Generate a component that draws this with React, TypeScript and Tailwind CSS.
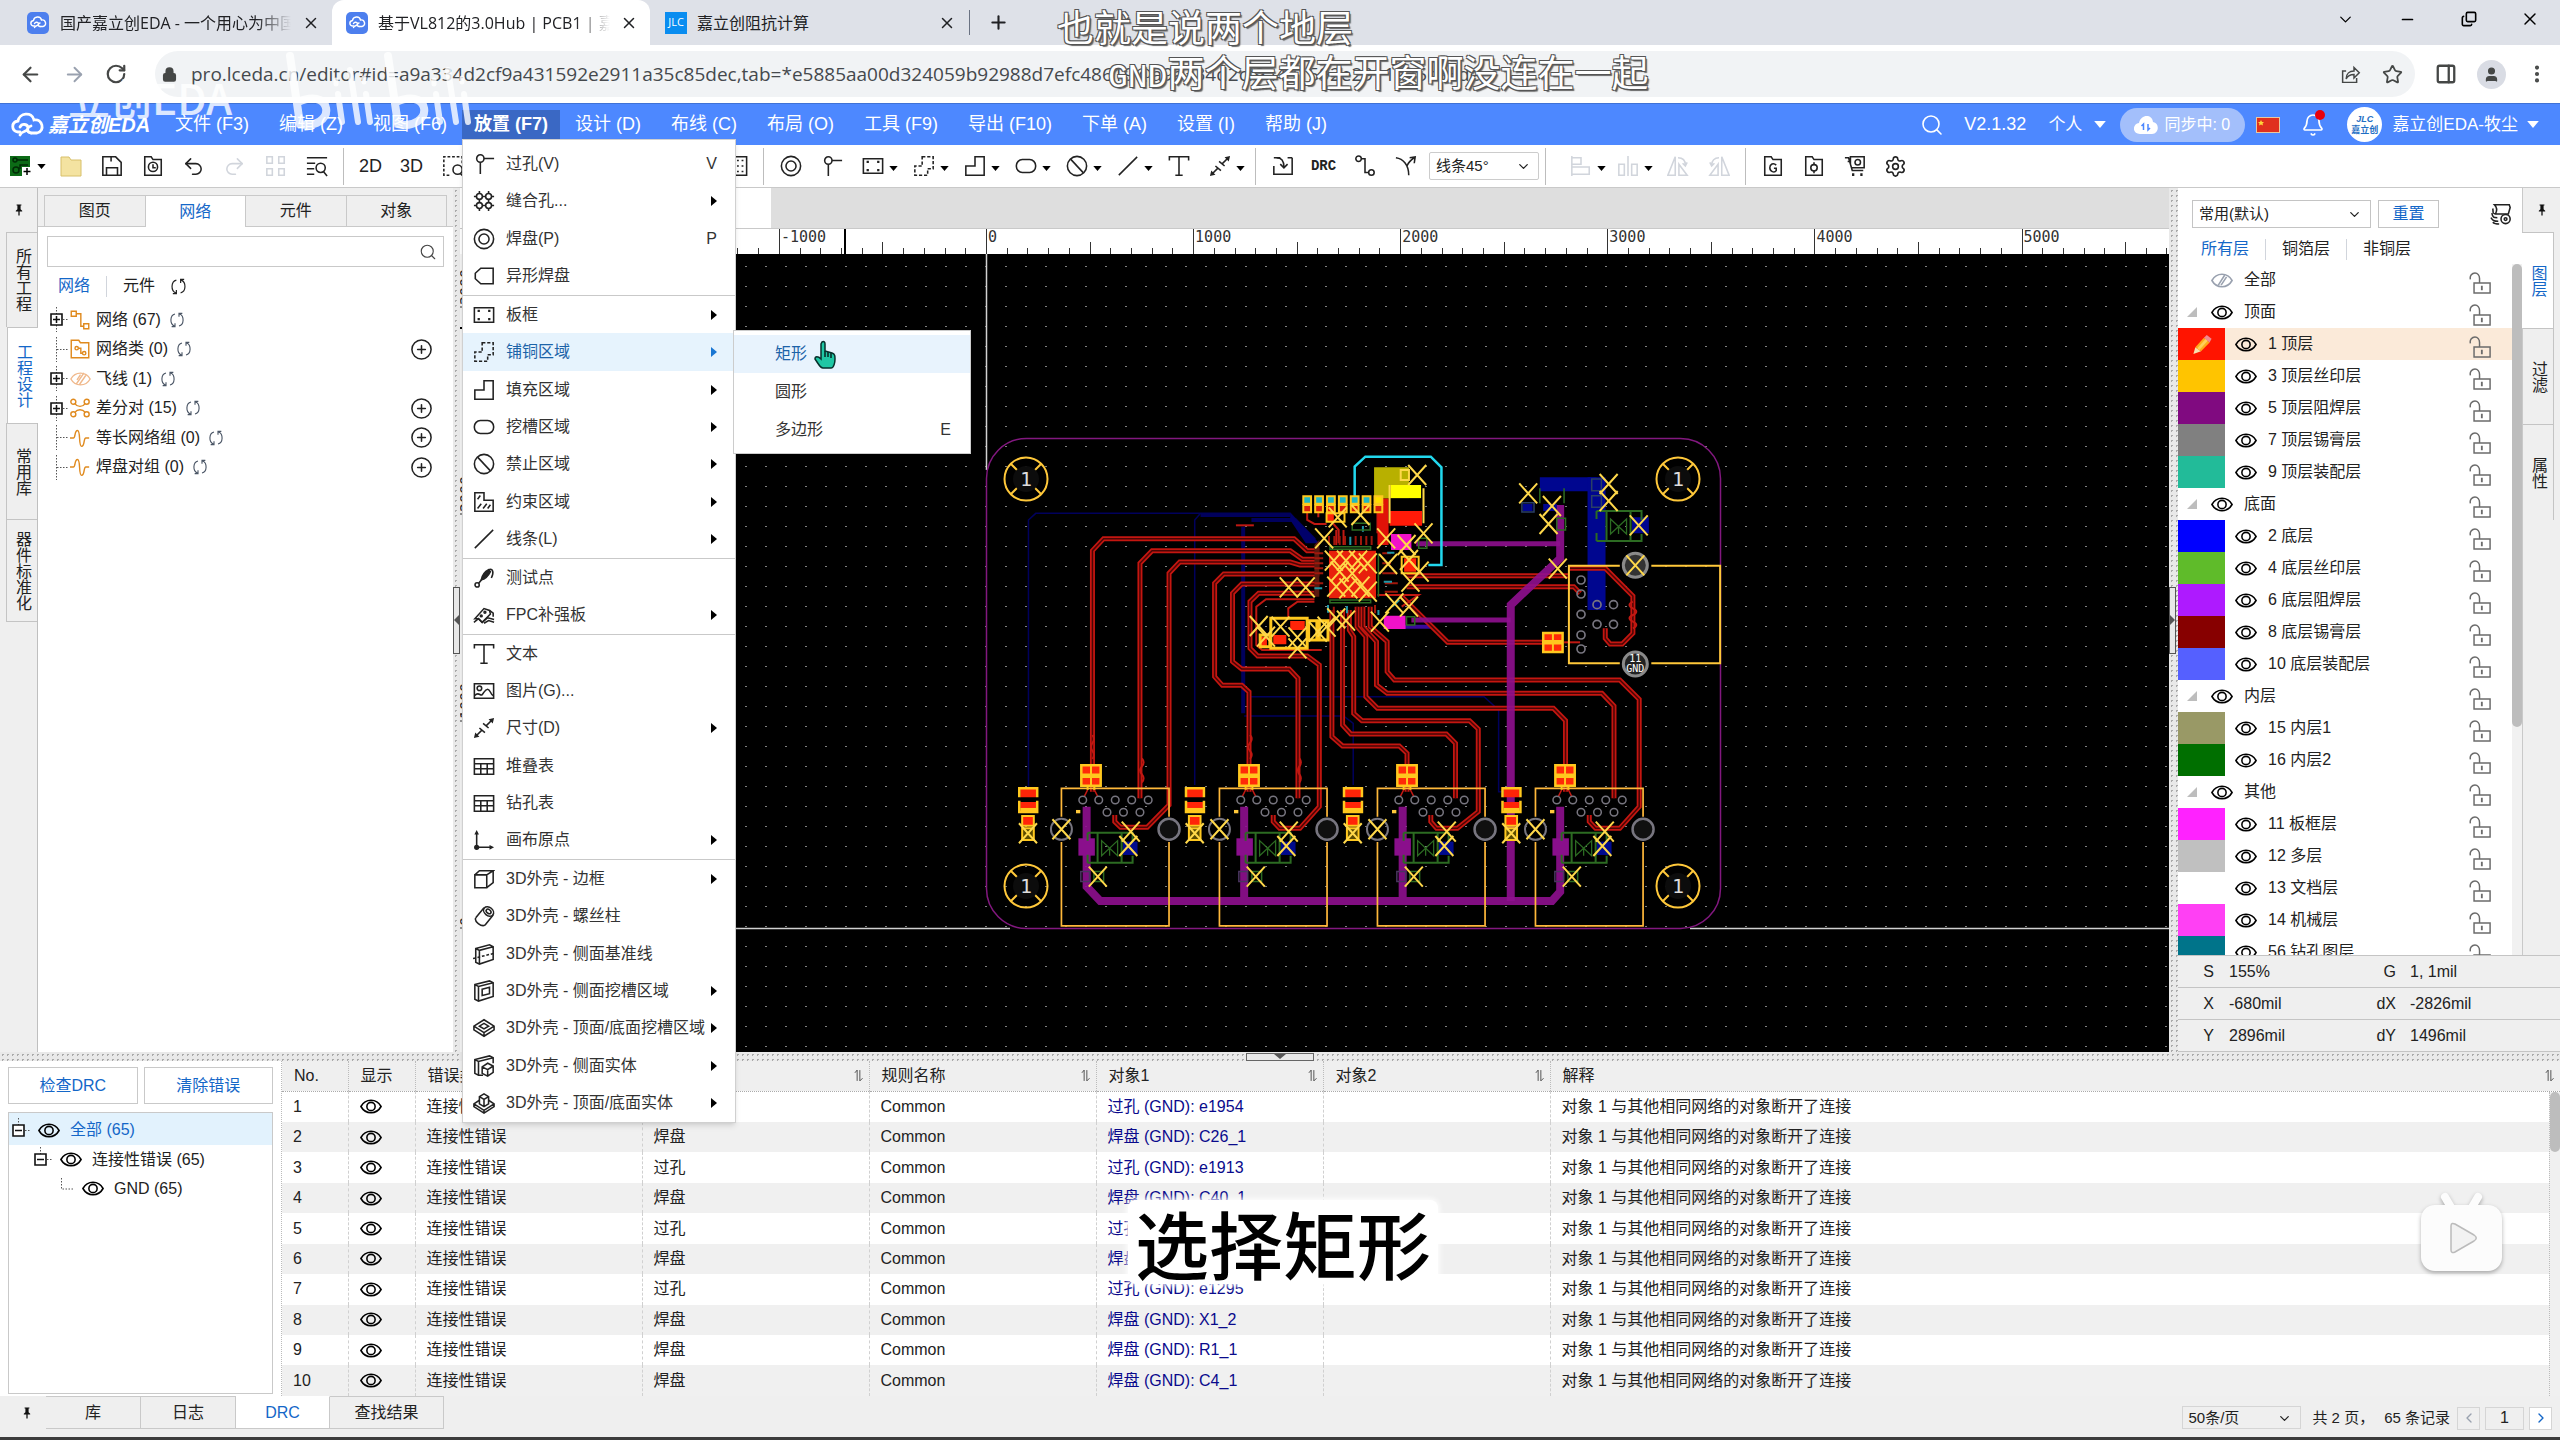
import React, { type ReactNode } from "react";
import {
  ArrowLeft, ArrowRight, RotateCw, Lock, Star, PanelRight, User, MoreVertical, X, Plus, Minus, Copy,
  ChevronDown, ChevronLeft, ChevronRight, Search, Bell, Undo2, Redo2, Settings, CirclePlus,
} from "lucide-react";

const FONT = "font-['Liberation_Sans','Noto_Sans_CJK_SC',sans-serif]";

/* ---------- icons ---------- */

function Svg({ children, className = "size-[22px]", sw = 1.7 }: { children: ReactNode; className?: string; sw?: number }) {
  return (
    <svg viewBox="0 0 24 24" className={`shrink-0 ${className}`} fill="none" stroke="currentColor" strokeWidth={sw} aria-hidden="true">
      {children}
    </svg>
  );
}

const shapes: Record<string, ReactNode> = {
  via: <><circle cx="8" cy="6" r="4" /><path d="M12 6h11M8 10v13" /></>,
  stitch: (
    <>
      <circle cx="7" cy="7" r="3.200" /><circle cx="17" cy="7" r="3.200" /><circle cx="7" cy="17" r="3.200" /><circle cx="17" cy="17" r="3.200" />
      <path d="M7 1v3M17 1v3M7 20v3M17 20v3M1 7h3M20 7h3M1 17h3M20 17h3M7 10v4M17 10v4M10 7h4M10 17h4" />
    </>
  ),
  pad: <><circle cx="12" cy="12" r="10.500" /><circle cx="12" cy="12" r="5.500" /></>,
  shapePad: <path d="M22 3.500v17H8.500L2.500 15V9l6-5.500z" />,
  board: (
    <>
      <path d="M1.500 4h21v16h-21z" />
      <path d="M5 7.500h2.500M16.500 7.500H19M5 16.500h2.500M16.500 16.500H19" strokeWidth="2.500" />
    </>
  ),
  copper: <path d="M10 2h12v13h-6v7H2v-10h8z" strokeDasharray="3.500 2" />,
  fill: <path d="M12 2h10v20H2V12h10z" />,
  slot: <rect x="1.500" y="5" width="21" height="14" rx="6.500" />,
  ban: <><circle cx="12" cy="12" r="10.500" /><path d="M5 4.500l14 15" /></>,
  constraint: <><path d="M2 2h10v8h10v12H2z" /><path d="M5 9l3-4M5 19l4-5M11 19l4-5M16 19l3-4" /></>,
  line: <path d="M2 22L22 2" />,
  probe: (
    <>
      <circle cx="4.500" cy="19.500" r="2.300" /><path d="M6 18l4-5" />
      <path d="M9 14c1-5 4-9 8-11l2 2c-2 4-5 8-10 9z" fill="currentColor" /><path d="M17 3c5-2 6 3 3 9" />
    </>
  ),
  fpc: (
    <>
      <path d="M2 16L12 5l6 2 1 4-9 9-4-4z" /><path d="M1 20l5-4 4 4 6-5 7 2M12 21l5-3 6 2" />
      <circle cx="13" cy="9" r="1" /><circle cx="9" cy="13" r="1" /><path d="M18 7l4 3v4" />
    </>
  ),
  text: <path d="M1.500 6V2h21v4M12 2v20M8 22h8" />,
  image: <><path d="M1.500 4h21v16h-21z" /><circle cx="7" cy="9" r="2.500" /><path d="M2 17c4-5 6 1 8-1s3-6 6-6 3 6 6 7" /></>,
  dim: (
    <>
      <path d="M3 21l7-7M14 10l7-7M7 12l6 5M11 7l6 5" /><path d="M1 23l1.500-6 4.500 4.500zM23 1l-1.500 6L17 2.500z" fill="currentColor" stroke="none" />
    </>
  ),
  table: <path d="M1.500 4h21v17h-21zM1.500 9.500h21M1.500 15h21M8.500 9.500V21M15.500 9.500V21" />,
  sheet: <path d="M1.500 2h21v20h-21zM12 6h2M17 6h2M12 12h2M17 12h2M12 18h2M17 18h2" />,
  origin: (
    <>
      <path d="M4 20V4M4 20h16" /><path d="M4 1l2.500 5h-5zM23 20l-5 2.500v-5z" fill="currentColor" stroke="none" /><circle cx="4" cy="20" r="2" fill="currentColor" />
    </>
  ),
  cube: <path d="M2 7.500h13v14H2zM2 7.500L7 3h15l-7 4.500M22 3v13l-7 5.500" />,
  post: (
    <>
      <path d="M3 14l9-11M13 22l9-11" /><path d="M3 14c-2 4 6 10 10 8" /><ellipse cx="17" cy="7" rx="6" ry="4.500" transform="rotate(40 17 7)" />
      <ellipse cx="17" cy="7" rx="3" ry="2" transform="rotate(40 17 7)" />
    </>
  ),
  sideLine: <><path d="M3 6l15-4 4 2v14L7 23l-4-2zM3 6l4 2L22 4M7 8v15" /><path d="M0 17l24-6" strokeDasharray="3 2" /></>,
  sideSlot: <><path d="M2 5l16-4 4 2v15L6 23l-4-2zM2 5l4 2L22 3M6 7v16" /><path d="M10 10l8-2v7l-8 2z" /></>,
  topSlot: <><path d="M12 3l11 7v4l-11 7L1 14v-4zM1 10l11 7 11-7M12 17v4" /><path d="M12 7l5 3-5 3-5-3z" /></>,
  sideSolid: <><path d="M11 22H6l-4-2V5l16-4 4 2v6M2 5l4 2L22 3M6 7v15" /><path d="M10 13l6-4 6 3v7l-6 4-6-3zM10 13l6 3 6-4M16 16v7" /></>,
  topSolid: (
    <>
      <path d="M7 9l-6 4v3l11 7 11-7v-3l-6-4M1 13l11 7 11-7M12 20v3" /><path d="M7 5l5-3 5 3v8l-5 3-5-3zM7 5l5 3 5-3M12 8v8" />
    </>
  ),
  grid: <path d="M2 2h6v7H2zM15 2h6v7h-6zM2 15h6v7H2zM15 15h6v7h-6z" />,
  listFind: <><path d="M1 3h22M1 9h9M1 15h8M1 21h8" /><circle cx="16" cy="14" r="5" /><path d="M19 18l4 5" /></>,
  dashFind: <><path d="M22 9V2H2v20h8" strokeDasharray="3 2" /><circle cx="17" cy="16" r="5" /><path d="M20 20l3 3" /></>,
  save: <><path d="M2 2h14l6 6v14H2zM6 22v-8h12v8M11 2v5" /></>,
  import: <><path d="M9 3H2M22 3v18H2V12M22 3h-5" /><path d="M5 3c6 0 8 4 8 10M9 10l4 4 4-4" /></>,
  net: <><circle cx="5" cy="4" r="3" /><path d="M8 4h4v15h4" /><circle cx="19" cy="19" r="3" /></>,
  route: <path d="M1 3c8 1 14 8 14 19M13 12c2-5 5-7 8-9M16 3l6-1-1 7" />,
  align: <path d="M2 1v22M2 3h10v7H2M2 13h19v8H2" />,
  distribute: <path d="M12 1v22M2 10h6v12H2zM16 10h6v12h-6z" />,
  mirror: <><path d="M9 2v20H1zM13 10l9 12h-9z" /><path d="M12 3c5 0 8 3 8 8M17 9l3 3 2-4" /></>,
  mirrorFlip: <><path d="M15 2v20h8zM11 10L2 22h9z" /><path d="M12 3C7 3 4 6 4 11M7 9l-3 3-2-4" /></>,
  docG: <><path d="M3 2h7l2 3h9v17H3z" /><path d="M15.500 11c-3-3-7-1-7 3s5 6 7 3v-2.500H13" /></>,
  docGear: <><path d="M3 2h7l2 3h9v17H3z" /><circle cx="12" cy="14" r="3.500" /><path d="M12 8v3M12 17v3" /></>,
  docClock: <><path d="M3 2h7l2 3h9v17H3z" /><circle cx="12" cy="13" r="5" /><path d="M12 10v4h3" /></>,
  cart: <><path d="M1 3h4l4 14h12M7 10V2h15v12H8M4 7h3" /><circle cx="15" cy="8" r="3" /><path d="M10 20v3M19 20v3" strokeWidth="2.500" /></>,
  refresh: <><path d="M9 3C1 5 1 18 8 21M4 22h5v-5M15 21c8-2 8-15 1-18M20 2h-5v5" /></>,
  share: <><path d="M7 8H3v13h16v-5" /><path d="M7 17c0-6 4-9 9-9V4l6 6-6 6v-4c-4 0-7 1-9 5z" /></>,
  orangeNet: <><path d="M1.500 1.500h6v6h-6zM16.500 16.500h6v6h-6zM7.500 4.500H13v15h3.500" /></>,
  orangeClass: <><path d="M1.500 22.500V1.500h9l2 3h10v18z" /><circle cx="8" cy="11" r="2" /><path d="M10 11h3v6h2" /><circle cx="17" cy="17" r="2" /></>,
  orangePair: (
    <>
      <circle cx="4" cy="4.500" r="3" /><circle cx="20" cy="4.500" r="3" /><circle cx="4" cy="19.500" r="3" /><circle cx="20" cy="19.500" r="3" />
      <path d="M6 7c3 4 9 4 12 0M6 17c3-4 9-4 12 0" />
    </>
  ),
  orangeWave: <path d="M0 12h4c3 0 1-9 5-9s1 19 5 19 2-10 5-10h4" />,
  layers: (
    <>
      <path d="M5 2h16l1 3-2 7H6c2-4 2-7-1-10zM3 6c1 5-1 5 3 6M2 11c1 5 2 5 6 5M1 16c2 3 3 4 8 4M3 21c2 2 4 2 7 2" />
      <circle cx="17" cy="17.500" r="5" /><circle cx="17" cy="17.500" r="1.500" />
    </>
  ),
};

function Ic({ n, className }: { n: string; className?: string }) {
  return <Svg className={className}>{shapes[n]}</Svg>;
}

function Eye({ off = false }: { off?: boolean }) {
  return (
    <svg viewBox="0 0 24 16" className={`h-[15px] w-[22px] shrink-0 ${off ? "text-gray-400" : "text-black"}`} fill="none" stroke="currentColor" strokeWidth="1.700" aria-hidden="true">
      <path d="M1 8c5-9 17-9 22 0-5 9-17 9-22 0z" />
      {off ? <path d="M8 13l7-11M11 13l6-9" /> : <circle cx="12" cy="8" r="4.500" />}
    </svg>
  );
}

function Unlock() {
  return (
    <svg viewBox="0 0 24 24" className="size-[22px] shrink-0 text-[#6b6b6b]" fill="none" stroke="currentColor" strokeWidth="1.600" aria-hidden="true">
      <path d="M1.500 8c-1-4 2-7 5-7s5 3 5 6v5M5.500 12h17.500v11H5.500z" />
      <path d="M14 16v4M13 16h2" strokeWidth="2" />
    </svg>
  );
}

function Pin() {
  return (
    <svg viewBox="0 0 10 14" className="h-[12px] w-[8px] shrink-0" aria-hidden="true">
      <path d="M2 0h6v1.500H7V6l2 2v1H5.800V14H4.200V9H1V8l2-2V1.500H2z" fill="#111" />
    </svg>
  );
}

function Caret({ light = false }: { light?: boolean }) {
  return (
    <svg viewBox="0 0 10 6" className={light ? "h-[7px] w-[12px] shrink-0 text-white" : "h-[5px] w-[9px] shrink-0 text-black"} aria-hidden="true">
      <path d="M0 0h10L5 6z" fill="currentColor" />
    </svg>
  );
}

function CloudMark({ className }: { className: string }) {
  return (
    <svg viewBox="0 0 34 26" className={className} fill="none" stroke="currentColor" strokeWidth="2.800" strokeLinecap="round" aria-hidden="true">
      <path d="M9 20H7c-7-1-7-10 0-11C8 1 21-1 23 8c8-2 12 11 3 13h-6" />
      <path d="M9 15c2-4 8-3 8 1-1 5-6 2-8 7M20 21c-5-1-4-6 0-7" />
    </svg>
  );
}

/* ---------- browser chrome ---------- */

function Favicon() {
  return (
    <span className="flex size-[22px] shrink-0 items-center justify-center rounded-[5px] bg-[#4d7fee] text-white">
      <CloudMark className="w-[17px]" />
    </span>
  );
}

function TabTitle({ children }: { children: ReactNode }) {
  return (
    <span className="min-w-0 flex-1 overflow-hidden whitespace-nowrap [mask-image:linear-gradient(to_right,black_85%,transparent)]">{children}</span>
  );
}

function BrowserTabs() {
  return (
    <div className="flex h-[45px] shrink-0 items-stretch bg-[#dee1e8] text-[16px] text-[#202124] font-['Open_Sans','Noto_Sans_CJK_SC',sans-serif]">
      <div className="flex w-[332px] items-center gap-[11px] pl-[27px] pr-[12px]">
        <Favicon />
        <TabTitle>国产嘉立创EDA - 一个用心为中国</TabTitle>
        <button aria-label="关闭标签页"><X size={18} /></button>
      </div>
      <div className="flex w-[318px] items-center gap-[10px] rounded-t-[12px] bg-white pl-[14px] pr-[12px]">
        <Favicon />
        <TabTitle>基于VL812的3.0Hub | PCB1 | 嘉立</TabTitle>
        <button aria-label="关闭标签页"><X size={18} /></button>
      </div>
      <div className="flex w-[319px] items-center gap-[10px] pl-[15px] pr-[13px]">
        <span className="flex h-[22px] w-[22px] shrink-0 items-center justify-center overflow-hidden bg-[#0a8df0] text-[11px] text-white">JLC</span>
        <span className="flex-1">嘉立创阻抗计算</span>
        <button aria-label="关闭标签页"><X size={18} /></button>
      </div>
      <div className="my-[10px] w-px bg-gray-500" />
      <button className="w-[57px] pl-[18px]" aria-label="新标签页"><Plus size={21} strokeWidth={2.400} /></button>
      <div className="flex-1" />
      <div className="flex h-[38px] items-center text-black">
        <button className="flex w-[62px] justify-center" aria-label="搜索标签页"><ChevronDown size={19} strokeWidth={1.600} /></button>
        <button className="flex w-[62px] justify-center" aria-label="最小化"><Minus size={17} strokeWidth={2.400} /></button>
        <button className="flex w-[61px] justify-center" aria-label="还原"><Copy size={16} strokeWidth={2.400} className="-scale-x-100 rotate-180" /></button>
        <button className="flex w-[61px] justify-center" aria-label="关闭"><X size={20} strokeWidth={1.700} /></button>
      </div>
    </div>
  );
}

function AddressBar() {
  return (
    <div className="flex h-[58px] shrink-0 items-center bg-white pl-[19px] text-[#454746]">
      <button className="w-[44px]" aria-label="后退"><ArrowLeft size={23} strokeWidth={2.300} /></button>
      <button className="w-[42px] text-gray-400" aria-label="前进"><ArrowRight size={23} /></button>
      <button className="w-[50px]" aria-label="刷新"><RotateCw size={22} strokeWidth={2.400} /></button>
      <div className="flex h-[46px] flex-1 items-center rounded-full bg-[#f1f3f5] pr-[12px]">
        <Lock size={15} strokeWidth={3} fill="currentColor" className="ml-[7px] shrink-0" />
        <input
          aria-label="地址"
          readOnly
          className="ml-[14px] min-w-0 flex-1 bg-transparent text-[19px] text-[#45494d] outline-none font-['Open_Sans',sans-serif]"
          value="pro.lceda.cn/editor#id=a9a334d2cf9a431592e2911a35c85dec,tab=*e5885aa00d324059b92988d7efc48619@a9a334d2cf9a431592e2911a35c85dec"
        />
        <button className="w-[42px]" aria-label="分享"><Ic n="share" className="size-[21px]" /></button>
        <button aria-label="收藏"><Star size={21} /></button>
      </div>
      <div className="flex w-[145px] items-center gap-[20px] pl-[20px]">
        <button aria-label="侧边栏"><PanelRight size={22} strokeWidth={2.500} /></button>
        <button className="flex size-[29px] items-center justify-center rounded-full bg-[#d9dce4]" aria-label="用户"><User size={17} fill="currentColor" /></button>
        <button aria-label="更多"><MoreVertical size={22} strokeWidth={2.500} /></button>
      </div>
    </div>
  );
}

/* ---------- place menu ---------- */

type Item = { icon: string; label: string; key?: string; sub?: boolean; active?: boolean };

const placeMenu: { h: string; items: Item[] }[] = [
  { h: "h-[150px]", items: [
    { icon: "via", label: "过孔(V)", key: "V" },
    { icon: "stitch", label: "缝合孔...", sub: true },
    { icon: "pad", label: "焊盘(P)", key: "P" },
    { icon: "shapePad", label: "异形焊盘" },
  ] },
  { h: "h-[263px]", items: [
    { icon: "board", label: "板框", sub: true },
    { icon: "copper", label: "铺铜区域", sub: true, active: true },
    { icon: "fill", label: "填充区域", sub: true },
    { icon: "slot", label: "挖槽区域", sub: true },
    { icon: "ban", label: "禁止区域", sub: true },
    { icon: "constraint", label: "约束区域", sub: true },
    { icon: "line", label: "线条(L)", sub: true },
  ] },
  { h: "h-[76px]", items: [
    { icon: "probe", label: "测试点" },
    { icon: "fpc", label: "FPC补强板", sub: true },
  ] },
  { h: "h-[225px]", items: [
    { icon: "text", label: "文本" },
    { icon: "image", label: "图片(G)..." },
    { icon: "dim", label: "尺寸(D)", sub: true },
    { icon: "table", label: "堆叠表" },
    { icon: "table", label: "钻孔表" },
    { icon: "origin", label: "画布原点", sub: true },
  ] },
  { h: "h-[263px]", items: [
    { icon: "cube", label: "3D外壳 - 边框", sub: true },
    { icon: "post", label: "3D外壳 - 螺丝柱" },
    { icon: "sideLine", label: "3D外壳 - 侧面基准线" },
    { icon: "sideSlot", label: "3D外壳 - 侧面挖槽区域", sub: true },
    { icon: "topSlot", label: "3D外壳 - 顶面/底面挖槽区域", sub: true },
    { icon: "sideSolid", label: "3D外壳 - 侧面实体", sub: true },
    { icon: "topSolid", label: "3D外壳 - 顶面/底面实体", sub: true },
  ] },
];

function HandCursor() {
  return (
    <svg viewBox="0 0 22 30" className="absolute left-[80px] top-[9px] h-[30px] w-[22px]" aria-hidden="true">
      <path d="M8 2c2-1 3 0 3 2v7l7 2c3 1 3 3 3 6s-1 9-4 9H9c-3 0-5-5-8-9 0-3 3-3 6 0V4z" fill="#1fc7a4" stroke="#07302b" strokeWidth="1.500" />
      <path d="M11 11v6M14 12v5M17 13v5" stroke="#07302b" strokeWidth="1.600" />
    </svg>
  );
}

function PlaceMenu() {
  return (
    <div className="absolute left-0 top-full z-30 w-[274px] border border-[#d0d0d0] bg-white pt-[5px] text-[16px] font-normal text-[#333] shadow-md" role="menu">
      {placeMenu.map((g, gi) => (
        <div key={gi} className={`flex flex-col ${g.h} ${gi > 0 ? "border-t border-[#c9c9c9]" : ""}`}>
          {g.items.map((it) => (
            <div key={it.label} className={`relative flex flex-1 ${it.active ? "bg-[#e6f3fd]" : ""}`}>
              <button role="menuitem" className={`flex w-full items-center whitespace-nowrap pl-[10px] pr-[18px] ${it.active ? "text-[#1c63a8]" : ""}`}>
                <span className="text-[#222]"><Ic n={it.icon} /></span>
                <span className="ml-[11px] flex-1 text-left">{it.label}</span>
                {it.key && <span>{it.key}</span>}
                {it.sub && (
                  <svg viewBox="0 0 6 10" className={`h-[10px] w-[6px] shrink-0 ${it.active ? "text-[#1976d2]" : "text-black"}`} aria-hidden="true"><path d="M0 0l6 5-6 5z" fill="currentColor" /></svg>
                )}
              </button>
              {it.active && (
                <div className="absolute -top-[3px] left-[270px] w-[238px] border border-[#ccc] bg-white py-[4px]" role="menu">
                  {[["矩形", ""], ["圆形", ""], ["多边形", "E"]].map(([label, key], i) => (
                    <button key={label} role="menuitem" className={`flex h-[38px] w-full items-center justify-between pl-[41px] pr-[19px] ${i === 0 ? "bg-[#e8f3fd] text-[#1c63a8]" : ""}`}>
                      <span>{label}</span>
                      <span>{key}</span>
                    </button>
                  ))}
                  <HandCursor />
                </div>
              )}
            </div>
          ))}
        </div>
      ))}
    </div>
  );
}

function MenuBar() {
  const before = ["文件 (F3)", "编辑 (Z)", "视图 (F6)"];
  const after = ["设计 (D)", "布线 (C)", "布局 (O)", "工具 (F9)", "导出 (F10)", "下单 (A)", "设置 (I)", "帮助 (J)"];
  return (
    <nav className="flex h-[42px] shrink-0 items-center border-t border-[#3f72d6] bg-[#4d88ff] text-[18px] text-white">
      <CloudMark className="ml-[11px] w-[34px] shrink-0" />
      <span className="ml-[3px] w-[112px] shrink-0 whitespace-nowrap text-[20px] font-bold italic">嘉立创EDA</span>
      {before.map((m) => <button key={m} className="h-[29px] whitespace-nowrap px-[15px]">{m}</button>)}
      <div className="relative h-[29px]">
        <button className="h-[29px] w-[98px] whitespace-nowrap bg-[#3a68c4] font-bold">放置 (F7)</button>
        <PlaceMenu />
      </div>
      <div className="flex">
        {after.map((m) => <button key={m} className="h-[29px] whitespace-nowrap px-[15px]">{m}</button>)}
      </div>
      <div className="flex-1" />
      <button className="mr-[20px]" aria-label="搜索"><Search size={24} strokeWidth={1.600} /></button>
      <span className="mr-[22px]">V2.1.32</span>
      <button className="mr-[14px] flex items-center gap-[12px] text-[17px]">个人 <Caret light /></button>
      <span className="mr-[11px] flex h-[34px] w-[125px] shrink-0 items-center whitespace-nowrap rounded-full bg-[#a3bffb] pl-[14px] text-[16px]">
        <svg viewBox="0 0 24 18" className="mr-[6px] w-[24px]" aria-hidden="true">
          <path d="M6 18c-8 0-8-10-1-11C7-2 18-2 19 6c7 1 6 12-1 12z" fill="#fff" />
          <path d="M9.500 14V8l-2 2M14 8v6l2-2" stroke="#4d88ff" fill="none" strokeWidth="1.500" />
        </svg>
        同步中: 0
      </span>
      <svg viewBox="0 0 24 16" className="mr-[21px] w-[24px]" aria-hidden="true">
        <path d="M0 0h24v16H0z" fill="#e8c8a0" /><path d="M1 1h22v14H1z" fill="#e0301e" />
        <path d="M5 3l1 2h2L6.500 6.500 7 8.500 5 7.500 3 8.500l.5-2L2 5h2z" fill="#ffd83a" />
      </svg>
      <button className="relative mr-[22px]" aria-label="通知">
        <Bell size={24} strokeWidth={1.700} />
        <span className="absolute -top-[3px] right-0 size-[10px] rounded-full bg-red-600" />
      </button>
      <span className="mr-[10px] flex size-[35px] shrink-0 flex-col items-center justify-center rounded-full bg-white text-[9px] leading-[11px] text-[#1f6fc4]">
        <b className="italic">JLC</b>
        <b>嘉立创</b>
      </span>
      <button className="mr-[21px] flex items-center gap-[9px] whitespace-nowrap text-[17px]">嘉立创EDA-牧尘 <Caret light /></button>
    </nav>
  );
}

/* ---------- toolbar ---------- */

function Tool({ n, label, dim = false, children }: { n?: string; label: string; dim?: boolean; children?: ReactNode }) {
  return (
    <button aria-label={label} className={`flex w-[41px] shrink-0 items-center justify-center ${dim ? "text-gray-300" : "text-[#222]"}`}>
      {n ? <Ic n={n} /> : children}
    </button>
  );
}
function DropTool({ n, label, dim = false, w = "w-[51px]" }: { n: string; label: string; dim?: boolean; w?: string }) {
  return (
    <button aria-label={label} className={`flex shrink-0 items-center gap-[5px] pl-[10px] ${w} ${dim ? "text-gray-300" : "text-[#222]"}`}>
      <Ic n={n} />
      <span className="pt-[4px]"><Caret /></span>
    </button>
  );
}
const Rule = () => <div className="mx-[6px] h-[37px] w-px shrink-0 bg-[#bdbdbd]" />;

function Toolbar() {
  return (
    <div className="flex h-[43px] shrink-0 items-center border-b border-[#c9c9c9] bg-white">
      <button aria-label="新建" className="flex w-[50px] shrink-0 items-center gap-[5px] pl-[10px]">
        <svg viewBox="0 0 22 20" className="w-[22px]" aria-hidden="true">
          <path d="M0 0h20v20H0z" fill="#0c6b16" />
          <g fill="none" stroke="#012c06" strokeWidth="1.500"><circle cx="5" cy="4" r="2" /><path d="M7 4h11M18 9h-8v4" /><circle cx="6" cy="14" r="3" /></g>
          <path d="M12 11h10v9H12z" fill="#fff" /><path d="M17 12v7M13.500 15.500h7" stroke="#000" strokeWidth="1.500" />
        </svg>
        <Caret />
      </button>
      <Tool label="打开">
        <svg viewBox="0 0 22 22" className="w-[22px]" aria-hidden="true"><path d="M1 2h8l2 3h10v16H1z" fill="#f4e3a1" stroke="#d8c06a" /></svg>
      </Tool>
      <Tool n="save" label="保存" />
      <Tool n="docClock" label="历史" />
      <Tool label="撤销"><Undo2 size={23} strokeWidth={1.600} /></Tool>
      <Tool label="重做" dim><Redo2 size={23} strokeWidth={1.600} /></Tool>
      <Tool n="grid" label="网格" dim />
      <Tool n="listFind" label="查找" />
      <Rule />
      <Tool label="二维"><span className="text-[18px]">2D</span></Tool>
      <Tool label="三维"><span className="text-[18px]">3D</span></Tool>
      <Tool n="dashFind" label="框选查找" />
      <div className="w-[243px] shrink-0" />
      <Tool n="sheet" label="表格" />
      <Rule />
      <Tool n="pad" label="焊盘" />
      <Tool n="via" label="过孔" />
      <DropTool n="board" label="板框" />
      <DropTool n="copper" label="铺铜" />
      <DropTool n="fill" label="填充" />
      <DropTool n="slot" label="挖槽" />
      <DropTool n="ban" label="禁止" />
      <DropTool n="line" label="线条" />
      <Tool n="text" label="文本" />
      <DropTool n="dim" label="尺寸" w="w-[50px]" />
      <Rule />
      <Tool n="import" label="导入变更" />
      <Tool label="检查"><span className="font-['Liberation_Mono'] text-[14px] font-bold">DRC</span></Tool>
      <Tool n="net" label="布线" />
      <Tool n="route" label="差分布线" />
      <div className="relative ml-[3px] w-[110px] shrink-0">
        <select aria-label="线条角度" className="h-[28px] w-full appearance-none rounded-[2px] border border-[#ccc] bg-white pl-[6px] text-[15px]"><option>线条45°</option></select>
        <ChevronDown size={15} className="pointer-events-none absolute right-[8px] top-[7px]" />
      </div>
      <Rule />
      <div className="w-[8px] shrink-0" />
      <DropTool n="align" label="对齐" dim w="w-[47px]" />
      <DropTool n="distribute" label="分布" dim w="w-[50px]" />
      <Tool n="mirror" label="左右翻转" dim />
      <Tool n="mirrorFlip" label="旋转" dim />
      <Rule />
      <Tool n="docG" label="Gerber" />
      <Tool n="docGear" label="贴片坐标" />
      <Tool n="cart" label="下单" />
      <Tool label="设置"><Settings size={23} strokeWidth={1.700} /></Tool>
    </div>
  );
}

/* ---------- left panel ---------- */

const sideTabs = [
  { t: "所有工程", h: "h-[95px]" },
  { t: "工程设计", h: "h-[96px]", on: true },
  { t: "常用库", h: "h-[96px]" },
  { t: "器件标准化", h: "h-[103px]" },
];

const tree = [
  { icon: "orangeNet", t: "网络 (67)", box: true },
  { icon: "orangeClass", t: "网络类 (0)", add: true },
  { icon: "eye", t: "飞线 (1)", box: true },
  { icon: "orangePair", t: "差分对 (15)", box: true, add: true },
  { icon: "orangeWave", t: "等长网络组 (0)", add: true },
  { icon: "orangeWave", t: "焊盘对组 (0)", add: true },
];

function TreeBox({ sign, off = false }: { sign: "+" | "-"; off?: boolean }) {
  return (
    <svg viewBox="0 0 20 29" className="h-[29px] w-[20px] shrink-0" fill="none" stroke="#111" aria-hidden="true">
      <path d={sign === "+" ? "M6.500 2V27M7 14.500h12" : "M6.500 2V14M7 14.500h12"} strokeDasharray="1.500 1.500" stroke="#555" />
      {!off && <><path d="M1 9h11v11H1z" fill="#fff" strokeWidth="1.600" /><path d={sign === "+" ? "M3 14.500h7M6.500 11v7" : "M3 14.500h7"} strokeWidth="1.500" /></>}
    </svg>
  );
}

function LeftPanel() {
  return (
    <aside className="flex w-[453px] shrink-0">
      <div className="flex w-[38px] shrink-0 flex-col items-end border-r border-[#bfbfbf] bg-[#efefef]">
        <button className="flex h-[44px] w-full items-center justify-center" aria-label="固定"><Pin /></button>
        {sideTabs.map((s) => (
          <button key={s.t} className={`flex w-[31px] items-center justify-center border-l border-t border-[#c4c4c4] text-[16px] leading-[18px] last:border-b [writing-mode:vertical-rl] ${s.h} ${s.on ? "-mr-px bg-white text-[#1467c8]" : "text-[#222]"}`}>
            {s.t}
          </button>
        ))}
      </div>
      <div className="flex min-w-0 flex-1 flex-col bg-white">
        <div className="flex h-[39px] items-end border-b border-[#c9c9c9] bg-[#efefef] px-[6px]">
          {["图页", "网络", "元件", "对象"].map((t, i) => (
            <button key={t} className={`flex-1 border-l border-t border-[#c9c9c9] text-[16px] last:border-r ${i === 1 ? "-mb-px h-[32px] bg-white text-[#1467c8]" : "h-[31px] text-[#222]"}`}>{t}</button>
          ))}
        </div>
        <div className="relative mx-[9px] mt-[9px]">
          <input aria-label="搜索网络" className="block h-[31px] w-full border border-[#c9c9c9] px-2" />
          <Search size={18} strokeWidth={1.500} className="absolute right-[7px] top-[7px] text-[#444]" />
        </div>
        <div className="flex h-[38px] items-center pl-[20px] text-[16px]">
          <button className="text-[#1467c8]">网络</button>
          <span className="mx-[16px] h-[21px] w-px bg-gray-300" />
          <button>元件</button>
          <Ic n="refresh" className="ml-[15px] size-[17px]" />
        </div>
        <ul className="grid h-[177px] grid-rows-6 pl-[12px] pr-[20px] text-[16px] text-[#222]">
          {tree.map((r) => (
            <li key={r.t} className="flex items-center">
              <TreeBox sign="+" off={!r.box} />
              <span className="mr-[5px] flex w-[21px] text-[#e08a1e]">
                {r.icon === "eye" ? (
                  <svg viewBox="0 0 24 16" className="w-[21px] text-[#f0b98c]" fill="none" stroke="currentColor" strokeWidth="1.600" aria-hidden="true"><path d="M1 8c5-9 17-9 22 0-5 9-17 9-22 0zM7 14L16 1M11 14l7-10M8 9l4-6" /></svg>
                ) : <Ic n={r.icon} className="size-[20px]" />}
              </span>
              <span className="whitespace-nowrap">{r.t}</span>
              <Ic n="refresh" className="ml-[8px] size-[16px] text-gray-600" />
              <span className="flex-1" />
              {r.add && <button aria-label={`添加 ${r.t}`}><CirclePlus size={23} strokeWidth={1.600} /></button>}
            </li>
          ))}
        </ul>
      </div>
    </aside>
  );
}

/* ---------- canvas ---------- */

const major = [-1000, 0, 1000, 2000, 3000, 4000, 5000];
const minor = Array.from({ length: 84 }, (_, i) => i - 24);

function RulerTop() {
  return (
    <svg className="block h-[25px] w-full shrink-0 bg-white" aria-hidden="true">
      <g transform="translate(-460 0)">
        {minor.map((m) => {
          const x = Math.round(986 + m * 20.71);
          const len = m % 10 === 0 ? 25 : m % 5 === 0 ? 12 : 6;
          return <path key={m} d={`M${x + 0.5} ${25 - len}V25`} stroke="#333" />;
        })}
        <path d="M845 0V25" stroke="#000" strokeWidth="2" />
        {major.map((m) => (
          <text key={m} x={988 + m * 0.2071} y="13" fontSize="15" fill="#333" fontFamily="DejaVu Sans Mono, monospace">{m}</text>
        ))}
      </g>
    </svg>
  );
}

function RulerSide() {
  return (
    <svg className="block h-full w-[25px] shrink-0 bg-[#f3f3f3]" aria-hidden="true">
      <g transform="translate(0 -254)">
        {[0, 1, 2, 3].map((m) => (
          <g key={m}>
            <path d={`M0 ${928 - m * 207}H25`} stroke="#333" />
            <text transform={`translate(12 ${926 - m * 207}) rotate(-90)`} fontSize="15" fill="#333" fontFamily="DejaVu Sans Mono, monospace">{m * 1000}</text>
          </g>
        ))}
        <path d="M0 328H25" stroke="#000" strokeWidth="2" />
      </g>
    </svg>
  );
}

const traces = [
  "M700 362H675L648 326H255L232 362V1085",
  "M700 388H665L640 362H355L330 400V1105",
  "M700 405H660L640 396H412L390 430V1125L345 1192H290L278 1175V1155",
  "M700 432H503L484 460V740L500 766H540L555 786V1085",
  "M700 462H540L521 490V695L540 717H638L656 745V1105",
  "M690 490H575L557 515V655L573 678H675L700 705V1130L660 1195H618L605 1175V1155",
  "M726 540V920L748 948H865L881 970V1085",
  "M748 540V885L765 912H962L981 940V1105",
  "M762 540V600L771 620V850L788 872H1010L1028 897V1145L985 1195H942L930 1175V1155",
  "M778 530V590L796 620V800L820 835H1183L1208 872V1085",
  "M790 530V590L818 635V765L840 790H1283L1308 828V1105",
  "M805 530V590L840 635V725L855 750H1320L1360 808V1130L1320 1195H1270L1257 1175V1155",
  "M880 437H1215M880 470H1225L1238 490",
  "M870 500L965 637H1160",
  "M1215 415H1290L1347 498V610L1325 642H1300L1290 625V595",
];
const thinTraces = [
  "M1205 637H1238", "M690 515H655L636 535V565", "M690 508H590L570 530V645L582 660H705",
  "M675 248V270L690 282H715M698 248V262M722 248V270L740 300V340M735 300V345M750 300V345M820 248V310",
  "M232 915q6 12 0 24t0 24t0 24M334 985q7 12 0 24t0 24t0 24M557 915q7 12 0 24t0 24t0 24M659 985q6 12 0 24t0 24t0 24",
  "M1347 515q-14 10 0 20t0 20t0 20t0 20", "M528 286H565", "M820 495H905L870 530",
];
const crosses: [number, number][] = [
  [902, 135], [1131, 190], [1297, 162], [1297, 213], [1180, 228], [1173, 282], [1359, 286], [1192, 416], [915, 310], [710, 325], [785, 255], [738, 262],
  [838, 325], [637, 472], [672, 472], [575, 588], [620, 590], [655, 622], [655, 655], [715, 590], [755, 572], [825, 575], [855, 520],
  [885, 530], [888, 455], [885, 390], [907, 425], [842, 402], [697, 605], [735, 565], [1352, 406],
  [730, 392], [755, 392], [780, 392], [800, 400], [742, 425], [768, 430], [735, 470], [760, 475], [785, 470], [800, 485], [590, 620], [880, 345],
];
const usb = [0, 326, 652, 978];
const leds = [0, 344, 670, 997];
const pinDots: [number, number][] = [[212, 1110], [245, 1110], [279, 1110], [313, 1110], [347, 1110], [262, 1147], [296, 1147], [330, 1147]];
const cPins: [number, number][] = [[1240, 450], [1240, 492], [1240, 553], [1240, 615], [1240, 657], [1273, 524], [1307, 524], [1273, 583], [1307, 583]];
const holes: [number, number][] = [[1026, 479], [1678, 479], [1026, 886], [1678, 886]];

const SX = 0.4847;
const SY = 0.3333;
const px = (x: number) => 980 + x * SX;
const py = (y: number) => 430 + y * SY;

const Cross = ({ x, y }: { x: number; y: number }) => (
  <path d={`M${px(x) - 9} ${py(y) - 10}l18 20m0-20l-18 20`} stroke="#ffd84a" strokeWidth="2" fill="none" />
);

function GreenPart({ x, y }: { x: number; y: number }) {
  return (
    <g transform={`translate(${px(x)} ${py(y)})`} fill="none" stroke="#2c6b22" strokeWidth="1.300">
      <path d="M10 1V31M34 1V31M0 1H45V10M0 31H45V24M0 1V9M0 23V31" strokeWidth="2" />
      <path d="M14 9V24L30 9V24ZM22 16V24" />
    </g>
  );
}

function Board() {
  return (
    <svg className="block h-full w-full bg-black" role="img" aria-label="PCB">
      <defs>
        <pattern id="dots" width="20" height="20" patternUnits="userSpaceOnUse" x="5" y="6"><path d="M0 0h2v1H0z" fill="#808080" /></pattern>
      </defs>
      <g transform="translate(-485 -254)">
        <rect x="485" y="254" width="3000" height="2000" fill="url(#dots)" />
        <path d="M986.500 254V470M485 928.500H1010M1690 928.500H3000" stroke="#d0d0d0" strokeWidth="1.500" />
        <rect x="986.500" y="438.500" width="734" height="490" rx="40" fill="none" stroke="#82187f" strokeWidth="1.500" />

        <g transform={`translate(980 430) scale(${SX} ${SY})`} fill="none">
          <g stroke="#00005c" className="[&>path]:[vector-effect:non-scaling-stroke]">
            <path d="M100 1070V270L115 250H640L690 330M443 1065V270L455 250M545 858H750L770 880V1065M555 800H1040L1070 840V1085H1095" strokeWidth="1.500" />
            <path d="M543 290V850M455 255H640M560 270H650L690 330" strokeWidth="4" />
            <path d="M640 250L700 340H672L640 270z" fill="#00006a" stroke="none" />
            <path d="M1155 163H1272" stroke="#00068f" strokeWidth="14" />
            <path d="M1272 142V540" stroke="#00068f" strokeWidth="18" />
            <path d="M860 590H930" stroke="#3a0a9a" strokeWidth="4" />
          </g>
          <g className="[&>path]:[vector-effect:non-scaling-stroke]">
            {traces.map((d) => <path key={d} d={d} stroke="#c41610" strokeWidth="5" />)}
            {traces.map((d) => <path key={d} d={d} stroke="#4a0505" strokeWidth="1.500" />)}
            {thinTraces.map((d) => <path key={d} d={d} stroke="#c01812" strokeWidth="2" />)}
          </g>
          <g stroke="#8f108f" strokeOpacity="0.900" className="[&>path]:[vector-effect:non-scaling-stroke]">
            <path d="M900 341H1197M890 570H1095" strokeWidth="5" />
            <path d="M1197 225V385L1095 525V1413" strokeWidth="8" />
            <path d="M220 1130V1370L248 1413H1180L1197 1385V1130M545 1130V1413M872 1130V1413" strokeWidth="8" />
          </g>
          <g stroke="none">
            <path d="M820 205H843V345H820z" fill="#e01208" />
            <path d="M813 112H885V205H813z" fill="#b8b000" />
            <path d="M848 165H910V205H848z" fill="#ffff00" />
            <path d="M848 205H912V243H848z" fill="#000" />
            <path d="M845 243H912V287H845z" fill="#ff1a08" />
            <path d="M720 362H817V505H720z" fill="#e8200c" />
            <path d="M848 312H890V360H848zM833 557H878V597H833z" fill="#f012c8" />
            <path d="M640 573H670V600H640zM605 615H632V643H605zM578 620H592V650H578zM715 250H730V275H715zM875 385H900V425H875z" fill="#ff2408" />
            <path d="M1120 222H1140V243H1120zM1162 222H1190V243H1162zM1345 262H1380V310H1345z" fill="#00068f" />
            <path d="M690 345L700 330V500H690z" fill="#5a1a10" />
          </g>
          <g className="[&>path]:[vector-effect:non-scaling-stroke]">
            <path d="M773 210V110L795 80H930L952 112V405H925" stroke="#22d8ee" strokeWidth="2.500" />
            <path d="M845 165V280M915 175V280M868 120H885V150H868z" stroke="#ffd84a" strokeWidth="2" />
            <path d="M600 565H675V655H600zM578 615H598V650H578zM678 572H695V630H678zM700 572H718V630H700z" stroke="#ffc81e" strokeWidth="3" />
            <path d="M870 380H905V430H870zM715 250H752V275H715z" stroke="#ffc81e" strokeWidth="2" />
            <path d="M720 345V318M731 345V318M742 345V318M753 345V318M775 345V318M786 345V318M797 345V318M808 345V318M690 370H708M690 385H708M690 400H708M690 415H708M690 430H708M690 460H708M830 370H848M830 400H848M830 430H860M835 460H862M835 485H862M730 530V550M815 525V550" stroke="#a0180c" strokeWidth="2" />
            <path d="M764 320V345M690 475H706M833 455H850M718 525V548M757 528V550M840 368H855M822 540V555M850 530L865 510M790 288V305" stroke="#2098a8" strokeWidth="2" />
            <path d="M722 350H806V358H722zM722 510H806V518H722zM822 370V500M768 280H805V300H768zM905 325H922V355H905zM880 560H897V585H880zM1155 175V220M1205 175V220M1190 265H1208V300H1190z" stroke="#2c6b22" strokeWidth="1.500" />
            <path d="M1320 407H1215V700H1320M1385 407H1527V700H1385" stroke="#ffc83a" strokeWidth="2" />
            <path d="M1262 147H1282V182H1262zM1262 197H1282V232H1262zM1118 218H1143V246H1118z" stroke="#2a3f66" strokeWidth="1.500" />
          </g>
          {[0, 1, 2, 3, 4, 5, 6].map((i) => (
            <g key={i} transform={`translate(${667 + i * 24.5} 199)`} className="[&>path]:[vector-effect:non-scaling-stroke]">
              <path d="M0 0H16V22H0z" fill={i === 6 ? "#ffe000" : "#1fb7c4"} stroke="#ffc81e" strokeWidth="2" />
              <path d="M0 26H16V48H0z" fill="#d8200c" stroke="#ffc81e" strokeWidth="2" />
            </g>
          ))}
          {usb.map((dx) => (
            <g key={dx} transform={`translate(${dx} 0)`} className="[&>path]:[vector-effect:non-scaling-stroke]">
              <path d="M168 1160V1075H390V1160M168 1236V1488H390V1236" stroke="#ffb83a" strokeWidth="1.700" />
              <path d="M203 1225H237V1277H203z" fill="#8a0f8c" />
              <path d="M209 1006H249V1034H209zM209 1040H249V1067H209z" fill="#ff2a08" stroke="#ffc81e" strokeWidth="2.500" />
              <path d="M229 1006V1067M222 1067V1080M236 1067V1080" stroke="#ffc81e" strokeWidth="2" />
              <path d="M222 1080L215 1100M236 1080L243 1100" stroke="#c01812" strokeWidth="1.500" />
              <path d="M208 1325H226V1355H208z" stroke="#4a3560" strokeWidth="1.500" />
              <path d="M235 1325H255V1355H235z" stroke="#2c6b22" strokeWidth="1.500" />
              <path d="M295 1235H325V1275H295z" fill="#000a8c" />
              <path d="M198 1140H207V1150H198z" fill="#ffc83a" />
            </g>
          ))}
          {leds.map((dx) => (
            <g key={dx} transform={`translate(${dx} 0)`} className="[&>path]:[vector-effect:non-scaling-stroke]">
              <path d="M83 1077H116V1102H83zM83 1116H116V1134H83z" fill="#ff2408" />
              <path d="M83 1134H116V1146H83z" fill="#ffc81e" />
              <path d="M81 1102V1075H118V1102M81 1112V1146H118V1112" stroke="#ffc81e" strokeWidth="2.500" />
              <path d="M87 1158H111V1187H87z" fill="#ff2408" stroke="#ffc81e" strokeWidth="2" />
              <path d="M87 1195H111V1230H87z" fill="#5a4a00" stroke="#ffc81e" strokeWidth="2" />
            </g>
          ))}
          <g className="[&>path]:[vector-effect:non-scaling-stroke]">
            <path d="M1162 609H1202V634H1162zM1162 640H1202V666H1162z" fill="#ff2a08" stroke="#ffc81e" strokeWidth="2.500" />
            <path d="M1182 609V666" stroke="#ffc81e" strokeWidth="2" />
          </g>
        </g>

        <GreenPart x={1272} y={240} />
        {usb.map((dx) => (
          <g key={dx}>
            <GreenPart x={222 + dx} y={1205} />
            <g fill="none" stroke="#77757f" strokeWidth="1.500">
              {pinDots.map(([x, y]) => <circle key={`${x}-${y}`} cx={px(x + dx)} cy={py(y)} r="3.800" />)}
              <circle cx={px(168 + dx)} cy={py(1198)} r="10.500" strokeWidth="2" />
              <circle cx={px(390 + dx)} cy={py(1198)} r="10.500" strokeWidth="2.500" fill="#101010" />
            </g>
            <Cross x={168 + dx} y={1198} /><Cross x={311 + dx} y={1205} /><Cross x={306 + dx} y={1248} /><Cross x={243 + dx} y={1340} />
          </g>
        ))}
        {leds.map((dx) => <Cross key={dx} x={99 + dx} y={1210} />)}
        <g fill="none" stroke="#77757f" strokeWidth="1.700">
          {cPins.map(([x, y]) => <circle key={`${x}-${y}`} cx={px(x)} cy={py(y)} r="4" />)}
        </g>
        <circle cx={px(1352)} cy={py(406)} r="12" fill="#333" stroke="#8a8a8a" strokeWidth="3" />
        <circle cx={px(1352)} cy={py(702)} r="12" fill="#222" stroke="#8a8a8a" strokeWidth="3" />
        <text x={px(1352)} y="662" textAnchor="middle" fontSize="10" fill="#fff" fontFamily="DejaVu Sans Mono, monospace">11</text>
        <text x={px(1352)} y="672" textAnchor="middle" fontSize="10" fill="#fff" fontFamily="DejaVu Sans Mono, monospace">GND</text>
        {crosses.map(([x, y]) => <Cross key={`${x}-${y}`} x={x} y={y} />)}
        {holes.map(([x, y]) => (
          <g key={`${x}-${y}`}>
            <circle cx={x} cy={y} r="21.500" fill="none" stroke="#ffc83a" strokeWidth="2" />
            <path d={`M${x - 15} ${y - 15}l30 30m0-30l-30 30`} stroke="#ffc83a" strokeWidth="2" />
            <circle cx={x} cy={y} r="13" fill="#0c0c0c" />
            <text x={x} y={y + 7} textAnchor="middle" fontSize="20" fill="#ddd" fontFamily="DejaVu Sans Mono, monospace">1</text>
          </g>
        ))}
      </g>
    </svg>
  );
}

const DOTS = "bg-[#e9e9e9] bg-[radial-gradient(#aaa_1px,transparent_1px)] bg-[length:5px_5px]";

function VSplitter({ flip = false }: { flip?: boolean }) {
  return (
    <div className={`flex shrink-0 items-center ${flip ? "w-[9px]" : "w-[7px]"} ${DOTS}`}>
      <div className="flex h-[67px] w-[7px] items-center justify-center border border-[#555] bg-[#e8e8e8]">
        <svg viewBox="0 0 5 10" className="h-[10px] w-[5px]" aria-hidden="true"><path d={flip ? "M0 0l5 5-5 5z" : "M5 0L0 5l5 5z"} fill="#555" /></svg>
      </div>
    </div>
  );
}

/* ---------- right panel ---------- */

type Layer = { t: string; c?: string; group?: boolean; all?: boolean; on?: boolean };
const layers: Layer[] = [
  { t: "全部", all: true },
  { t: "顶面", group: true },
  { t: "1 顶层", c: "bg-[#ff1400]", on: true },
  { t: "3 顶层丝印层", c: "bg-[#ffc400]" },
  { t: "5 顶层阻焊层", c: "bg-[#800a80]" },
  { t: "7 顶层锡膏层", c: "bg-[#808080]" },
  { t: "9 顶层装配层", c: "bg-[#22bb99]" },
  { t: "底面", group: true },
  { t: "2 底层", c: "bg-[#0000ff]" },
  { t: "4 底层丝印层", c: "bg-[#5fbb2a]" },
  { t: "6 底层阻焊层", c: "bg-[#ae1aff]" },
  { t: "8 底层锡膏层", c: "bg-[#870000]" },
  { t: "10 底层装配层", c: "bg-[#5560ff]" },
  { t: "内层", group: true },
  { t: "15 内层1", c: "bg-[#999966]" },
  { t: "16 内层2", c: "bg-[#006f00]" },
  { t: "其他", group: true },
  { t: "11 板框层", c: "bg-[#ff22ff]" },
  { t: "12 多层", c: "bg-[#c0c0c0]" },
  { t: "13 文档层", c: "bg-white" },
  { t: "14 机械层", c: "bg-[#ff40f4]" },
  { t: "56 钻孔图层", c: "bg-[#00748a]" },
];

function LayerRow({ l }: { l: Layer }) {
  return (
    <li className={`flex h-[32px] shrink-0 items-center ${l.on ? "bg-[#fbead9]" : ""}`}>
      {l.c ? (
        <span className={`flex h-full w-[47px] items-center justify-center ${l.c}`}>
          {l.on && (
            <svg viewBox="0 0 20 22" className="h-[21px] w-[20px]" aria-hidden="true">
              <path d="M1 21l2-7 6 4z" fill="#f8dfb0" /><path d="M3 14L12 4l6 5-9 9z" fill="#ffab1a" /><path d="M5 15l9-10 2 2-9 10z" fill="#ffd05a" /><path d="M12 4l3-3 5 4-2 4z" fill="#f08a90" />
            </svg>
          )}
        </span>
      ) : (
        <span className="flex w-[23px] justify-center pl-[4px]">
          {l.group && <svg viewBox="0 0 10 10" className="size-[10px]" aria-hidden="true"><path d="M10 0v10H0z" fill="#bdbdbd" /></svg>}
        </span>
      )}
      <span className="ml-[10px] flex"><Eye off={l.all} /></span>
      <span className="ml-[11px] flex-1 whitespace-nowrap">{l.t}</span>
      <span className="mr-[21px] pt-[5px]"><Unlock /></span>
    </li>
  );
}

function RightPanel() {
  return (
    <aside className="flex w-[382px] shrink-0 flex-col bg-[#efefef] text-[16px] text-[#222]">
      <div className="flex min-h-0 flex-1">
        <div className="flex w-[345px] flex-col border-r border-[#c9c9c9] bg-white">
          <div className="flex h-[52px] shrink-0 items-center pl-[14px] pr-[10px]">
            <div className="relative w-[179px]">
              <select aria-label="图层方案" className="h-[28px] w-full appearance-none border border-[#c4c4c4] bg-white pl-[6px] text-[15px]"><option>常用(默认)</option></select>
              <ChevronDown size={15} className="pointer-events-none absolute right-[9px] top-[7px]" />
            </div>
            <button className="ml-[7px] h-[28px] w-[61px] border border-[#c4c4c4] leading-[24px] text-[#1467c8]">重置</button>
            <span className="flex-1" />
            <button aria-label="图层管理"><Ic n="layers" /></button>
          </div>
          <div className="flex h-[24px] shrink-0 items-center pb-[6px] pl-[23px]">
            <button className="text-[#1467c8]">所有层</button>
            <span className="mx-[16px] h-[21px] w-px bg-gray-300" />
            <button>铜箔层</button>
            <span className="mx-[16px] h-[21px] w-px bg-gray-300" />
            <button>非铜层</button>
          </div>
          <div className="flex min-h-0 flex-1">
            <ul className="flex min-h-0 flex-1 flex-col overflow-hidden">
              {layers.map((l) => <LayerRow key={l.t} l={l} />)}
            </ul>
            <div className="w-[10px] bg-[#f1f1f1]"><div className="h-[67%] rounded-full bg-[#bdbdbd]" /></div>
          </div>
        </div>
        <div className="flex w-[31px] flex-col">
          <button className="flex h-[44px] items-center justify-center pl-[7px]" aria-label="固定"><Pin /></button>
          {["图层", "过滤", "属性"].map((t, i) => (
            <button key={t} className={`flex h-[96px] items-center justify-center border-r border-t border-[#c4c4c4] leading-[18px] [writing-mode:vertical-rl] ${i === 0 ? "-ml-px bg-white text-[#1467c8]" : ""}`}>{t}</button>
          ))}
        </div>
      </div>
      <dl className="grid shrink-0 auto-rows-[32px] grid-cols-[36px_163px_19px_1fr] items-center border-b border-[#c4c4c4]">
        {[["S", "155%", "G", "1, 1mil"], ["X", "-680mil", "dX", "-2826mil"], ["Y", "2896mil", "dY", "1496mil"]].map((r) => (
          <div key={r[0]} className="contents">
            <dt className="flex h-full items-center justify-end border-t border-[#c4c4c4]">{r[0]}</dt>
            <dd className="flex h-full items-center border-t border-[#c4c4c4] pl-[15px]">{r[1]}</dd>
            <dt className="flex h-full items-center justify-end border-t border-[#c4c4c4]">{r[2]}</dt>
            <dd className="flex h-full items-center border-t border-[#c4c4c4] pl-[14px]">{r[3]}</dd>
          </div>
        ))}
      </dl>
    </aside>
  );
}

/* ---------- bottom panel ---------- */

const rows = [
  ["过孔", "e1954"], ["焊盘", "C26_1"], ["过孔", "e1913"], ["焊盘", "C40_1"], ["过孔", ""],
  ["焊盘", ""], ["过孔", "e1295"], ["焊盘", "X1_2"], ["焊盘", "R1_1"], ["焊盘", "C4_1"],
];

function Sort() {
  return (
    <svg viewBox="0 0 10 14" className="h-[13px] w-[9px]" fill="none" stroke="#444" aria-hidden="true"><path d="M1 4l2.500-3V13M6.500 1V13L9.500 10" /></svg>
  );
}

function Head({ children, sort = true, cls = "" }: { children?: ReactNode; sort?: boolean; cls?: string }) {
  return (
    <th className={`border-r border-dotted border-[#bbb] pl-[12px] pr-[6px] text-left font-normal ${cls}`}>
      <span className="flex items-center justify-between">{children ?? <span />}{sort && <Sort />}</span>
    </th>
  );
}

const cell = "border-r border-dashed border-[#d0d0d0] px-[11px]";

function BottomPanel() {
  return (
    <section className="flex h-[379px] shrink-0 flex-col border-b-[3px] border-[#3c3c3c] bg-[#efefef] text-[16px] text-[#222]">
      <div className="flex h-[335px] shrink-0">
        <div className="flex w-[282px] shrink-0 flex-col border-r border-dotted border-[#bbb] bg-white px-[8px] pt-[6px]">
          <div className="flex gap-[6px]">
            <button className="h-[37px] flex-1 border border-[#c9c9c9] text-[#1467c8]">检查DRC</button>
            <button className="h-[37px] flex-1 border border-[#c9c9c9] text-[#1467c8]">清除错误</button>
          </div>
          <ul className="mb-[2px] mt-[8px] flex-1 border border-[#c9c9c9]">
            <li className="flex h-[32px] items-center bg-[#e2f2fd] pl-[3px] pt-[2px] text-[#1467c8]">
              <TreeBox sign="-" /><span className="ml-[6px] flex"><Eye /></span><span className="ml-[10px]">全部 (65)</span>
            </li>
            <li className="flex h-[29px] items-center pl-[25px]">
              <TreeBox sign="-" /><span className="ml-[6px] flex"><Eye /></span><span className="ml-[10px]">连接性错误 (65)</span>
            </li>
            <li className="flex h-[29px] items-center pl-[52px]">
              <svg viewBox="0 0 12 29" className="h-[29px] w-[12px]" aria-hidden="true"><path d="M.500 4V15H12" fill="none" stroke="#555" strokeDasharray="1.500 1.500" /></svg>
              <span className="ml-[9px] flex"><Eye /></span><span className="ml-[10px]">GND (65)</span>
            </li>
          </ul>
        </div>
        <div className="flex min-w-0 flex-1 flex-col">
          <table className="h-[335px] w-full table-fixed border-collapse">
            <colgroup>
              <col className="w-[66px]" /><col className="w-[67px]" /><col className="w-[227px]" /><col className="w-[227px]" />
              <col className="w-[227px]" /><col className="w-[227px]" /><col className="w-[227px]" /><col />
            </colgroup>
            <thead>
              <tr className="h-[30px] border-b border-dotted border-[#aaa]">
                <Head sort={false}>No.</Head>
                <Head sort={false}>显示</Head>
                <Head>错误类型</Head>
                <Head />
                <Head>规则名称</Head>
                <Head>对象1</Head>
                <Head>对象2</Head>
                <Head cls="border-r-0">解释</Head>
              </tr>
            </thead>
            <tbody>
              {rows.map(([kind, id], i) => (
                <tr key={i} className="bg-white even:bg-[#f0f0f0]">
                  <td className={cell}>{i + 1}</td>
                  <td className={cell}><Eye /></td>
                  <td className={cell}>连接性错误</td>
                  <td className={cell}>{kind}</td>
                  <td className={cell}>Common</td>
                  <td className={`${cell} text-[#0a0a8c]`}>{id ? `${kind} (GND): ${id}` : kind}</td>
                  <td className={cell} />
                  <td className="px-[11px]">对象 1 与其他相同网络的对象断开了连接</td>
                </tr>
              ))}
            </tbody>
          </table>
        </div>
        <div className="-ml-[11px] w-[11px] shrink-0 pt-[31px]"><div className="h-[304px] border-l border-dotted border-[#bbb] bg-[#f0f0f0]"><div className="h-[60px] rounded-full bg-[#bdbdbd]" /></div></div>
      </div>
      <div className="flex min-h-0 flex-1 items-start pr-[8px]">
        <button className="flex h-[33px] w-[46px] items-center justify-center pl-[8px]" aria-label="固定"><Pin /></button>
        {[["库", "w-[95px]"], ["日志", "w-[95px]"], ["DRC", "w-[94px]"], ["查找结果", "w-[114px]"]].map(([t, w]) => (
          <button key={t} className={`h-[33px] border border-l-0 border-[#c9c9c9] ${w} ${t === "DRC" ? "border-t-white bg-white text-[#1467c8]" : ""}`}>{t}</button>
        ))}
        <span className="flex-1" />
        <div className="flex items-center pt-[10px]">
          <div className="relative w-[119px]">
            <select aria-label="每页条数" className="h-[23px] w-full appearance-none border border-[#d5d5d5] bg-transparent pl-[5px] text-[15px]"><option>50条/页</option></select>
            <ChevronDown size={15} className="pointer-events-none absolute right-[9px] top-[5px]" />
          </div>
          <span className="ml-[11px] whitespace-nowrap text-[15px]">共 2 页，</span>
          <span className="ml-[10px] mr-[7px] whitespace-nowrap text-[15px]">65 条记录</span>
          <button className="flex h-[23px] w-[23px] items-center justify-center border border-[#d5d5d5] text-gray-400" aria-label="上一页"><ChevronLeft size={16} /></button>
          <input aria-label="页码" defaultValue="1" className="mx-[5px] h-[23px] w-[39px] border border-[#d5d5d5] bg-transparent text-center" />
          <button className="flex h-[23px] w-[23px] items-center justify-center border border-[#d5d5d5] bg-white text-[#1467c8]" aria-label="下一页"><ChevronRight size={16} /></button>
        </div>
      </div>
    </section>
  );
}

/* ---------- video overlays ---------- */

const outline = "[text-shadow:-1px_-1px_0_#555,1px_-1px_0_#555,-1px_1px_0_#555,1px_1px_0_#555,2px_2px_1px_#666]";

function Overlays() {
  return (
    <div className="pointer-events-none absolute inset-0 z-40 overflow-hidden font-['Noto_Sans_CJK_SC',sans-serif]">
      <p className={`absolute left-[1057px] top-[4px] whitespace-nowrap text-[37px] leading-[44px] text-white ${outline}`}>也就是说两个地层</p>
      <p className={`absolute left-[1108px] top-[49px] whitespace-nowrap text-[37px] leading-[44px] text-white ${outline}`}>
        <span className="font-['Liberation_Mono',monospace] text-[33px]">GND</span>两个层都在开窗啊没连在一起
      </p>
      <div className="absolute left-[68px] top-[52px] flex items-end gap-[54px] text-white/80">
        <span className="text-[42px] font-medium leading-[70px]">立创EDA</span>
        <svg viewBox="0 0 185 80" className="w-[185px]" fill="none" stroke="currentColor" strokeWidth="8" strokeLinecap="round" aria-label="bilibili">
          {[0, 98].map((dx) => (
            <g key={dx} transform={`translate(${dx} 0)`}>
              <path d="M4 4L14 72C30 76 42 66 40 56S26 44 12 50" />
              <path d="M52 42L56 70M64 18L72 70M80 42L84 70" strokeWidth="6" />
              <path d="M50 28v4M78 26v4" strokeWidth="5" />
            </g>
          ))}
        </svg>
      </div>
      <p className="absolute left-[1128px] top-[1200px] whitespace-nowrap rounded-[8px] bg-white px-[7px] text-[74px] font-medium leading-[84px] text-black shadow-[0_0_5px_2px_rgba(255,255,255,0.8)]">选择矩形</p>
      <svg viewBox="0 0 84 84" className="absolute left-[2420px] top-[1192px] w-[84px] drop-shadow-[0_2px_2px_rgba(0,0,0,0.3)]" aria-hidden="true">
        <path d="M25 5l7 12M58 5l-7 12" stroke="#fcfcfc" strokeWidth="8" strokeLinecap="round" />
        <rect x="1" y="13" width="81" height="66" rx="14" fill="#fcfcfc" />
        <path d="M31 34c0-3 2-3 4-2l19 11c3 2 3 4 0 6L35 60c-2 1-4 1-4-2z" fill="#f2f2f2" stroke="#bbb" strokeWidth="1.500" />
      </svg>
    </div>
  );
}

export default function App() {
  return (
    <div className={`relative flex h-screen flex-col overflow-hidden bg-[#efefef] text-[16px] text-[#222] ${FONT}`}>
      <BrowserTabs />
      <AddressBar />
      <MenuBar />
      <Toolbar />
      <div className="flex min-h-0 flex-1">
        <LeftPanel />
        <VSplitter />
        <main className="flex min-w-0 flex-1 flex-col">
          <div className="flex h-[41px] shrink-0 border-b border-[#c9c9c9] bg-[#dedede]">
            <div className="w-[311px] bg-white" />
          </div>
          <RulerTop />
          <div className="flex min-h-0 flex-1">
            <RulerSide />
            <div className="min-w-0 flex-1"><Board /></div>
          </div>
        </main>
        <VSplitter flip />
        <RightPanel />
      </div>
      <div className={`flex h-[9px] shrink-0 items-center justify-center ${DOTS}`}>
        <div className="flex h-[8px] w-[68px] items-center justify-center border border-[#666] bg-[#e8e8e8]">
          <svg viewBox="0 0 12 5" className="h-[5px] w-[12px]" aria-hidden="true"><path d="M0 0h12L6 5z" fill="#555" /></svg>
        </div>
      </div>
      <BottomPanel />
      <Overlays />
    </div>
  );
}
